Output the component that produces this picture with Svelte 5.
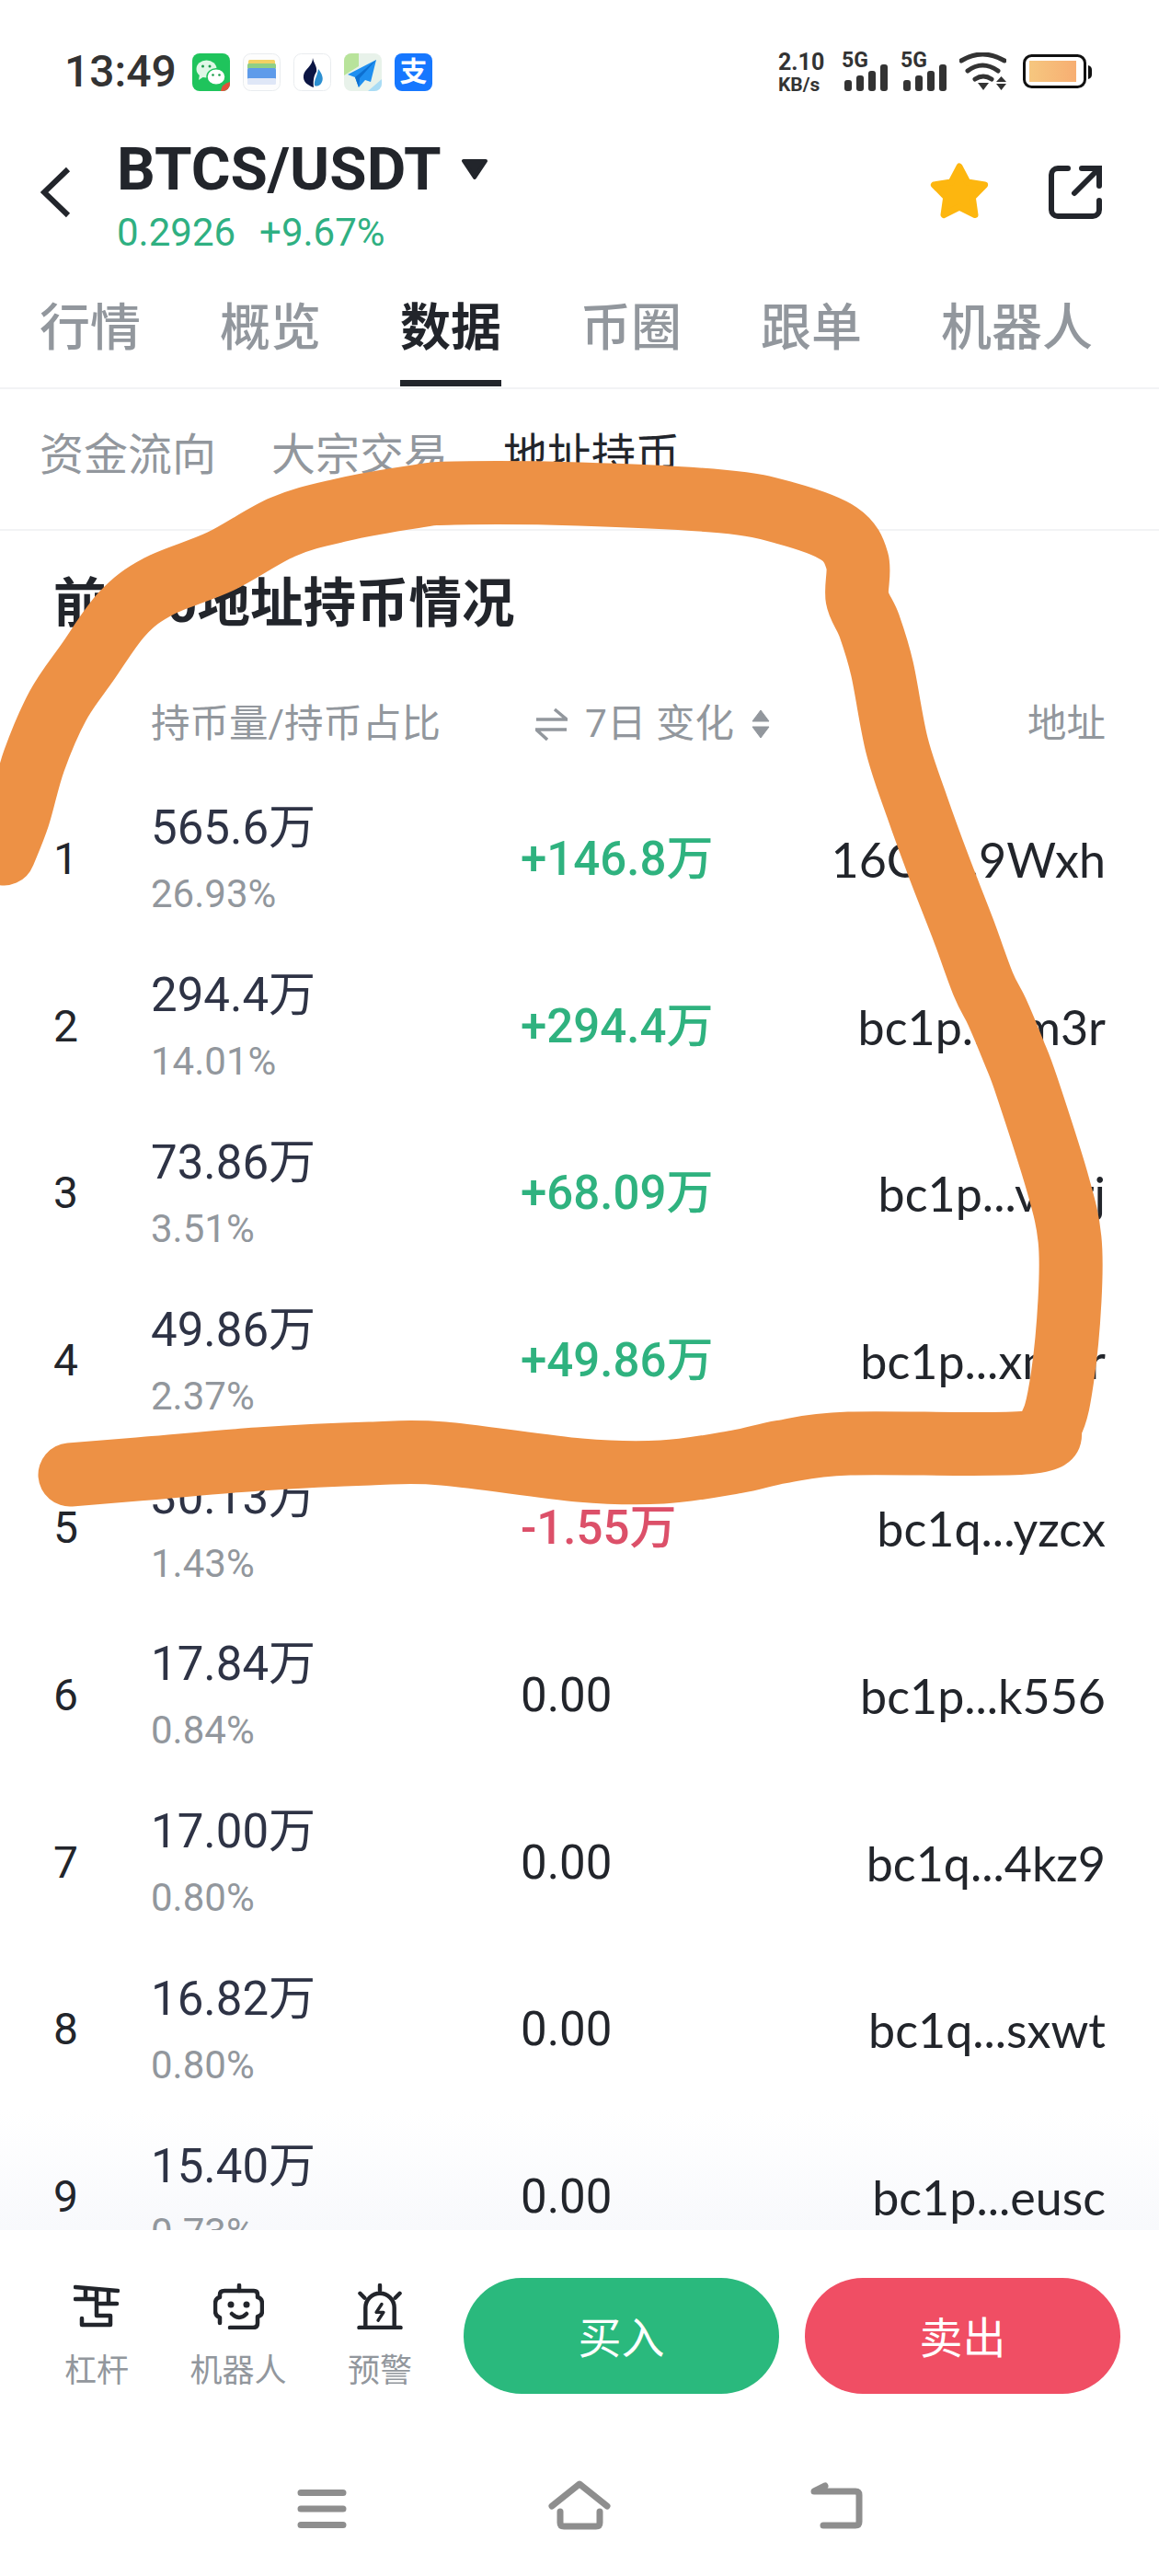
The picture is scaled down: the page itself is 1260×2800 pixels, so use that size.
<script>
  const tabs = ['行情', '概览', '数据', '币圈', '跟单', '机器人'];
  const subTabs = ['资金流向', '大宗交易', '地址持币'];

  const rows = [
    { amount: '565.6万', pct: '26.93%', change: '+146.8万', dir: 'up', addr: '16Cq...9Wxh' },
    { amount: '294.4万', pct: '14.01%', change: '+294.4万', dir: 'up', addr: 'bc1p...em3r' },
    { amount: '73.86万', pct: '3.51%', change: '+68.09万', dir: 'up', addr: 'bc1p...vwrj' },
    { amount: '49.86万', pct: '2.37%', change: '+49.86万', dir: 'up', addr: 'bc1p...xmnr' },
    { amount: '30.13万', pct: '1.43%', change: '-1.55万', dir: 'down', addr: 'bc1q...yzcx' },
    { amount: '17.84万', pct: '0.84%', change: '0.00', dir: 'flat', addr: 'bc1p...k556' },
    { amount: '17.00万', pct: '0.80%', change: '0.00', dir: 'flat', addr: 'bc1q...4kz9' },
    { amount: '16.82万', pct: '0.80%', change: '0.00', dir: 'flat', addr: 'bc1q...sxwt' },
    { amount: '15.40万', pct: '0.73%', change: '0.00', dir: 'flat', addr: 'bc1p...eusc' }
  ];

  // centre line of the hand drawn marker stroke
  const marker = [
    [4, 928], [20, 887], [37, 827], [63, 767], [95, 720], [133, 667], [173, 637], [240, 610],
    [307, 573], [368, 555], [450, 540], [494, 536], [630, 537], [785, 545], [855, 558], [912, 580],
    [932, 610], [932, 650], [945, 680], [959, 727], [975, 810], [997, 877], [1021, 943], [1047, 1010],
    [1069, 1070], [1084, 1100], [1102, 1143], [1116, 1180], [1150, 1287], [1163, 1347], [1163, 1413], [1155, 1497],
    [1143, 1547], [1117, 1568], [923, 1569], [850, 1578], [800, 1589], [720, 1600], [630, 1598],
    [482, 1580], [402, 1580], [281, 1586], [161, 1596], [76, 1603]
  ];

  function smooth(pts) {
    let d = `M${pts[0][0]} ${pts[0][1]}`;
    for (let i = 0; i < pts.length - 1; i++) {
      const p0 = pts[i - 1] || pts[i];
      const p1 = pts[i];
      const p2 = pts[i + 1];
      const p3 = pts[i + 2] || p2;
      const c1 = [p1[0] + (p2[0] - p0[0]) / 6, p1[1] + (p2[1] - p0[1]) / 6];
      const c2 = [p2[0] - (p3[0] - p1[0]) / 6, p2[1] - (p3[1] - p1[1]) / 6];
      d += ` C${c1[0]} ${c1[1]} ${c2[0]} ${c2[1]} ${p2[0]} ${p2[1]}`;
    }
    return d;
  }

  const markerPath = smooth(marker);
</script>

<div class="page">
  <div class="status">
    <span class="time">13:49</span>
    <div class="apps">
      <svg viewBox="0 0 41 41" width="41" height="41">
        <rect width="41" height="41" rx="8" fill="#1fc45c" />
        <ellipse cx="15.5" cy="17" rx="11" ry="9.5" fill="#dff7e6" />
        <path d="M8 23 L7 29 L13 25 Z" fill="#dff7e6" />
        <ellipse cx="26" cy="25.5" rx="10" ry="8.8" fill="#fff" stroke="#1fc45c" stroke-width="1.5" />
        <circle cx="11.5" cy="14" r="1.5" fill="#1a9c4a" />
        <circle cx="19" cy="14" r="1.5" fill="#1a9c4a" />
        <circle cx="22.5" cy="23.5" r="1.3" fill="#1a9c4a" />
        <circle cx="29.5" cy="23.5" r="1.3" fill="#1a9c4a" />
        <path d="M41 31 V33 A8 8 0 0 1 33 41 H31 Q32 33 41 31 Z" fill="#e2503a" />
      </svg>
      <svg viewBox="0 0 41 41" width="41" height="41">
        <rect x="0.5" y="0.5" width="40" height="40" rx="8" fill="#fdfdfd" stroke="#e9ecef" />
        <rect x="6" y="7" width="29" height="6" rx="1.5" fill="#f3d163" />
        <rect x="5" y="11" width="31" height="6" rx="1.5" fill="#8fcf86" />
        <rect x="5" y="16" width="31" height="12" rx="1.5" fill="#5e9bea" />
        <rect x="5" y="27" width="31" height="7" rx="1.5" fill="#dfe7f7" />
      </svg>
      <svg viewBox="0 0 41 41" width="41" height="41">
        <rect x="0.5" y="0.5" width="40" height="40" rx="8" fill="#fff" stroke="#e9ecef" />
        <path d="M21 5 C22 11 26 14 25 20 C23 23 21 28 22 37 C16 35 10 31 11 24 C12 17 21 14 21 5 Z" fill="#0b1543" />
        <path d="M27 17 C31 22 33 27 31 31 C29 36 25 36 23 35 C22 29 26 25 27 17 Z" fill="#2c8fd1" />
      </svg>
      <svg viewBox="0 0 41 41" width="41" height="41">
        <rect width="41" height="41" rx="8" fill="#e8f2ea" />
        <path d="M0 8 A8 8 0 0 1 8 0 H16 V14 L0 24 Z" fill="#b8e39a" />
        <path d="M26 41 L41 28 V33 A8 8 0 0 1 33 41 Z" fill="#a9dcf5" />
        <path d="M35 7 L4 23 L12 26 L16 37 L23 29 L29 31 Z" fill="#1f8ff0" />
        <path d="M35 7 L12 26 L16 37 L17 27 Z" fill="#0d6fd0" />
      </svg>
      <div class="alipay">支</div>
    </div>
    <div class="sys">
      <div class="speed"><span>2.10</span><small>KB/s</small></div>
      {#each [0, 1] as s}
        <div class="signal">
          <span>5G</span>
          <svg viewBox="0 13 50 29" width="50" height="29">
            <rect x="3" y="30" width="8" height="12" rx="3" fill="#333" />
            <rect x="16" y="25" width="8" height="17" rx="3" fill="#333" />
            <rect x="29" y="20" width="8" height="22" rx="3" fill="#333" />
            <rect x="42" y="13" width="8" height="29" rx="3" fill="#333" />
          </svg>
        </div>
      {/each}
      <svg viewBox="0 0 51 42" width="51" height="42">
        <g fill="none" stroke="#333" stroke-width="5" stroke-linecap="round">
          <path d="M2 9 Q25 -5 49 9" />
          <path d="M9 20 Q25 8 42 20" />
          <path d="M17 29 Q26 23 35 29" />
        </g>
        <path d="M20 33 H32 L26 41 Z" fill="#333" />
        <path d="M45.5 26 L51 32 H40 Z M40 34 H51 L45.5 41 Z" fill="#333" />
      </svg>
      <svg class="battery" viewBox="0 0 75 37" width="75" height="37">
        <defs>
          <linearGradient id="batt" x1="0" x2="1" y1="0" y2="0">
            <stop offset="0" stop-color="#f6c77f" />
            <stop offset="1" stop-color="#f7ae72" />
          </linearGradient>
        </defs>
        <rect x="1.5" y="1.5" width="66" height="34" rx="8" fill="#fff" stroke="#111" stroke-width="3" />
        <rect x="7" y="7" width="51" height="23" fill="url(#batt)" />
        <path d="M71 12 Q75 13 75 17 V22 Q75 26 71 27 Z" fill="#111" />
      </svg>
    </div>
  </div>

  <header class="head">
    <svg class="back" viewBox="0 0 33 56" width="33" height="56">
      <path d="M30 3 L4 28 L30 53" fill="none" stroke="#22252b" stroke-width="6" />
    </svg>
    <div class="pair">
      <div class="pair-name">
        <span>BTCS/USDT</span>
        <svg viewBox="0 0 30 24" width="30" height="24">
          <path d="M3 3 H27 L15 21 Z" fill="#22252b" stroke="#22252b" stroke-width="4" stroke-linejoin="round" />
        </svg>
      </div>
      <div class="pair-price"><span>0.2926</span><span>+9.67%</span></div>
    </div>
    <div class="head-actions">
      <svg viewBox="0 0 66 63" width="66" height="63">
        <path d="M33 4 L41.8 20.9 L60.6 24 L47.3 37.6 L50 56.5 L33 48 L16 56.5 L18.7 37.6 L5.4 24 L24.2 20.9 Z" fill="#fdb60f" stroke="#fdb60f" stroke-width="7" stroke-linejoin="round" />
      </svg>
      <svg viewBox="0 0 58 58" width="58" height="58">
        <g fill="none" stroke="#22252b" stroke-width="6" stroke-linecap="round">
          <path d="M21 3 H10 A7 7 0 0 0 3 10 V48 A7 7 0 0 0 10 55 H48 A7 7 0 0 0 55 48 V38" />
          <path d="M28 30 L54 4" />
          <path d="M36 3 H55 V22" />
        </g>
      </svg>
    </div>
  </header>

  <nav class="tabs">
    {#each tabs as tab}
      <div class="tab" class:active={tab === '数据'}>{tab}</div>
    {/each}
  </nav>

  <nav class="subtabs">
    {#each subTabs as tab}
      <div class="subtab" class:active={tab === '地址持币'}>{tab}</div>
    {/each}
  </nav>

  <main class="list">
    <h2>前100地址持币情况</h2>
    <div class="row-head">
      <span></span>
      <span>持币量/持币占比</span>
      <span class="change-head">
        <svg viewBox="0 0 35 36" width="35" height="36">
          <path d="M1 13 H34 L21 2 M34 24 H1 L13 35" fill="none" stroke="#92979d" stroke-width="3.5" />
        </svg>
        <span>7日 变化</span>
        <svg viewBox="0 0 20 32" width="20" height="32">
          <path d="M10 1 L19 13 H1 Z M1 19 H19 L10 31 Z" fill="#92979d" stroke="#92979d" stroke-width="1" stroke-linejoin="round" />
        </svg>
      </span>
      <span class="right">地址</span>
    </div>
    {#each rows as row, i}
      <div class="row">
        <span class="num">{i + 1}</span>
        <div class="hold">
          <span class="amount">{row.amount}</span>
          <span class="pct">{row.pct}</span>
        </div>
        <span class="change {row.dir}">{row.change}</span>
        <span class="addr">{row.addr}</span>
      </div>
    {/each}
  </main>

  <footer class="foot">
    <div class="actions">
      <div class="tool">
        <svg viewBox="0 0 50 46" width="50" height="46">
          <g fill="none" stroke="#22252b" stroke-width="4.5" stroke-linecap="round" stroke-linejoin="round">
            <path d="M2 2 L48 6" />
            <path d="M13 4 V15 M2 15 H25" />
            <path d="M25 5 V33 H40 V43 H9 V36" />
            <path d="M38 6 V20 M28 20 H47" />
          </g>
        </svg>
        <span>杠杆</span>
      </div>
      <div class="tool">
        <svg viewBox="0 0 55 50" width="55" height="50">
          <g fill="none" stroke="#22252b" stroke-width="4.5" stroke-linecap="round" stroke-linejoin="round">
            <path d="M28 2 V8" />
            <path d="M18 48 H43 Q48 48 48 43 V36 Q53 35 53 30 V22 Q53 16 48 15 V12 Q48 8 44 8 H12 Q7 8 7 12 V15 Q2 16 2 22 V30 Q2 35 7 37 V43" />
            <path d="M20 33 Q28 41 36 33" />
          </g>
          <circle cx="19" cy="23" r="3.5" fill="#22252b" />
          <circle cx="36" cy="23" r="3.5" fill="#22252b" />
        </svg>
        <span>机器人</span>
      </div>
      <div class="tool">
        <svg viewBox="0 0 50 51" width="50" height="51">
          <g fill="none" stroke="#22252b" stroke-width="4.5" stroke-linecap="round" stroke-linejoin="round">
            <path d="M2 49 H48" />
            <path d="M9 48 V27 A16 16 0 0 1 41 27 V48" />
            <path d="M25 2 V8 M3 11 L8 16 M47 11 L42 16" />
            <path d="M27 23 L21 32 H29 L23 41" stroke-width="3.5" />
          </g>
        </svg>
        <span>预警</span>
      </div>
      <button class="buy">买入</button>
      <button class="sell">卖出</button>
    </div>
    <div class="sysnav">
      <svg viewBox="0 0 70 54" width="70" height="54">
        <path d="M12 13.5 H58 M12 31 H58 M12 48.5 H58" fill="none" stroke="#8e8e8e" stroke-width="7" stroke-linecap="round" />
      </svg>
      <svg viewBox="0 0 70 54" width="70" height="54">
        <g fill="none" stroke="#8e8e8e" stroke-width="7" stroke-linecap="round" stroke-linejoin="round">
          <path d="M5 28 L35 4 L65 28" />
          <path d="M14 34 V46 Q14 50 18 50 H53 Q57 50 57 46 V34" />
        </g>
      </svg>
      <svg viewBox="0 0 70 54" width="70" height="54">
        <g fill="none" stroke="#8e8e8e" stroke-width="7" stroke-linecap="round" stroke-linejoin="round">
          <path d="M20 49 H55 Q59 49 59 45 V16 Q59 12 55 12 H10 L22 6" />
        </g>
      </svg>
    </div>
  </footer>

  <svg class="marker" viewBox="0 0 1260 2800" width="1260" height="2800">
    <path d={markerPath} fill="none" stroke="#ed9145" stroke-width="69" stroke-linecap="round" stroke-linejoin="round" />
  </svg>
</div>

<style>
  :global(body) {
    margin: 0;
    background: #fff;
  }

  .page {
    position: relative;
    width: 1260px;
    height: 2800px;
    overflow: hidden;
    display: flex;
    flex-direction: column;
    background: #fff;
    font-family: Roboto, "Noto Sans CJK SC", sans-serif;
    color: #22252b;
  }

  .status {
    height: 140px;
    box-sizing: border-box;
    padding: 57px 73px 0 70px;
    display: flex;
    align-items: flex-start;
    flex-shrink: 0;
  }

  .time {
    font-size: 48px;
    font-weight: 500;
    line-height: 42px;
    width: 139px;
    color: #333;
  }

  .apps {
    display: flex;
    gap: 14px;
    margin-top: 1px;
  }

  .alipay {
    width: 41px;
    height: 41px;
    border-radius: 8px;
    background: #1677ff;
    color: #fff;
    font-size: 30px;
    font-weight: 700;
    line-height: 40px;
    text-align: center;
  }

  .sys {
    margin-left: auto;
    display: flex;
    align-items: flex-start;
    gap: 14px;
  }

  .speed {
    width: 49px;
    margin-right: 6px;
    display: flex;
    flex-direction: column;
    color: #333;
    font-weight: 700;
  }

  .speed span {
    font-size: 25px;
    line-height: 22px;
  }

  .speed small {
    font-size: 21px;
    line-height: 22px;
    margin-top: 2px;
    white-space: nowrap;
  }

  .signal {
    width: 50px;
    display: flex;
    flex-direction: column;
  }

  .signal span {
    font-size: 23px;
    font-weight: 700;
    line-height: 17px;
    height: 17px;
    color: #333;
  }

  .signal svg {
    margin-top: -4px;
  }

  .battery {
    margin-left: 4px;
    margin-top: 2px;
  }

  .head {
    height: 160px;
    flex-shrink: 0;
    box-sizing: border-box;
    padding-left: 44px;
    padding-right: 62px;
    display: flex;
    align-items: flex-start;
  }

  .back {
    margin-top: 41px;
    margin-right: 50px;
    flex-shrink: 0;
  }

  .pair {
    padding-top: 9px;
  }

  .pair-name {
    display: flex;
    align-items: center;
    gap: 21px;
    font-size: 65.5px;
    font-weight: 700;
    line-height: 70px;
    height: 70px;
  }

  .pair-price {
    margin-top: 9px;
    display: flex;
    gap: 26px;
    font-size: 42px;
    line-height: 50px;
    color: #2fb082;
  }

  .head-actions {
    margin-left: auto;
    margin-top: 37px;
    display: flex;
    align-items: center;
    gap: 64px;
  }

  .tabs {
    height: 123px;
    flex-shrink: 0;
    box-sizing: border-box;
    border-bottom: 2px solid #f2f3f5;
    padding-left: 43px;
    display: flex;
    gap: 86px;
  }

  .tab {
    height: 120px;
    box-sizing: border-box;
    padding-top: 24px;
    font-size: 55px;
    font-weight: 500;
    line-height: 64px;
    color: #92979d;
  }

  .tab.active {
    color: #22252b;
    font-weight: 700;
    border-bottom: 7px solid #22252b;
  }

  .subtabs {
    height: 154px;
    flex-shrink: 0;
    box-sizing: border-box;
    border-bottom: 2px solid #f2f3f5;
    padding: 42px 0 0 43px;
    display: flex;
    gap: 60px;
  }

  .subtab {
    font-size: 48px;
    line-height: 60px;
    color: #92979d;
  }

  .subtab.active {
    color: #22252b;
  }

  .list {
    flex: 1;
    min-height: 0;
    overflow: hidden;
    background: linear-gradient(to bottom, #fff calc(100% - 130px), #f8f9fc 100%);
  }

  h2 {
    margin: 50px 0 0 58px;
    font-size: 57.5px;
    font-weight: 700;
    line-height: 60px;
  }

  .row-head,
  .row {
    display: grid;
    grid-template-columns: 106px 402px 1fr auto;
    padding: 0 58px 0 58px;
  }

  .row-head {
    margin-top: 75px;
    margin-bottom: 31px;
    height: 50px;
    align-items: center;
    font-size: 42.5px;
    line-height: 50px;
    color: #92979d;
  }

  .change-head {
    display: flex;
    align-items: center;
    padding-left: 16px;
    gap: 19px;
    white-space: nowrap;
  }

  .right {
    text-align: right;
  }

  .row {
    height: 181.8px;
    align-items: center;
  }

  .num {
    font-size: 48px;
    line-height: 60px;
  }

  .hold {
    display: flex;
    flex-direction: column;
    gap: 17px;
  }

  .amount {
    font-size: 51px;
    line-height: 60px;
    color: #2e3345;
  }

  .pct {
    font-size: 42px;
    line-height: 50px;
    color: #92979d;
  }

  .change {
    font-size: 51px;
    font-weight: 500;
    line-height: 60px;
  }

  .change.up {
    color: #2fb27f;
  }

  .change.down {
    color: #dc5069;
  }

  .change.flat {
    font-weight: 400;
    color: #22252b;
  }

  .addr {
    font-family: Lato, sans-serif;
    font-size: 52px;
    line-height: 60px;
    text-align: right;
    color: #22252b;
  }

  .foot {
    height: 376px;
    flex-shrink: 0;
    background: #fff;
  }

  .actions {
    padding: 52px 42px 0 28px;
    display: flex;
    align-items: flex-start;
  }

  .tool {
    width: 154px;
    height: 126px;
    box-sizing: border-box;
    padding-top: 6px;
    display: flex;
    flex-direction: column;
    align-items: center;
    font-size: 35px;
    line-height: 40px;
    color: #92979d;
  }

  .tool svg {
    height: 50px;
  }

  .tool span {
    margin-top: 26px;
    white-space: nowrap;
  }

  button {
    width: 343px;
    height: 126px;
    border: none;
    border-radius: 63px;
    padding: 5px 0 0;
    color: #fff;
    font-family: inherit;
    font-size: 47px;
    line-height: 60px;
  }

  .buy {
    margin-left: 14px;
    background: #2ab97d;
  }

  .sell {
    margin-left: 28px;
    background: #f04e64;
  }

  .sysnav {
    padding: 94px 0 0 315px;
    display: flex;
    gap: 210px;
  }

  .marker {
    position: absolute;
    left: 0;
    top: 0;
    pointer-events: none;
  }
</style>
